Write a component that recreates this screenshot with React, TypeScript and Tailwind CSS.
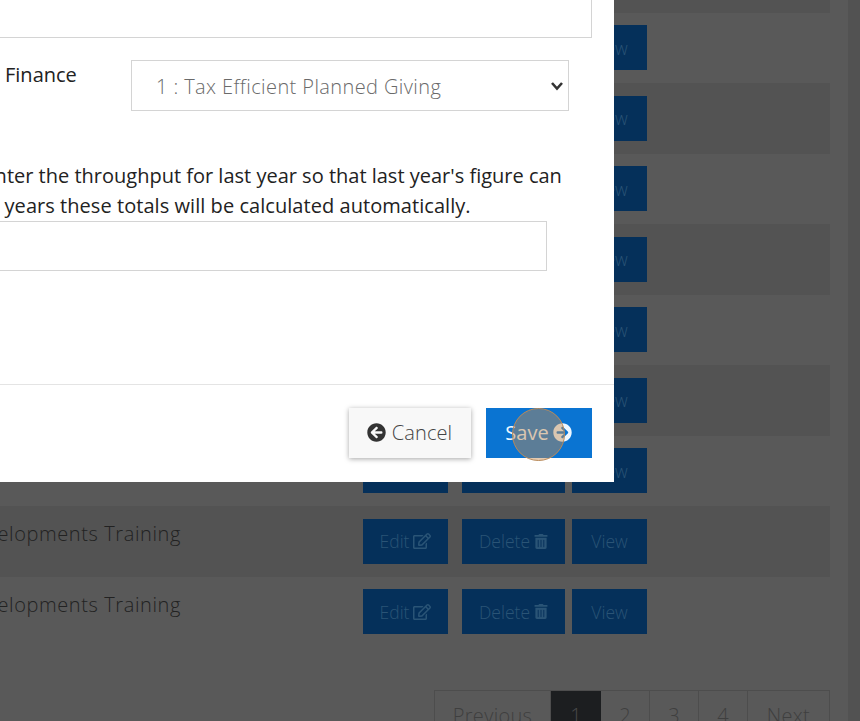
import { FaArrowCircleLeft, FaArrowCircleRight, FaRegEdit, FaTrashAlt } from "react-icons/fa";

const rowLabels = ["", "", "", "", "", "", "", "Developments Training", "Developments Training"];

const RowButtons = () => (
  <div className="flex gap-[7px] items-center">
    <span className="w-[85px] h-[45px] mr-[7px] bg-[#05305a] text-[#2a5476] flex items-center justify-center gap-1 text-[17.5px] font-light">
      Edit <FaRegEdit className="w-[18px] h-[18px]" />
    </span>
    <span className="w-[103px] h-[45px] bg-[#05305a] text-[#2a5476] flex items-center justify-center gap-1 text-[17.5px] font-light">
      Delete <FaTrashAlt className="w-[14px] h-[15px]" />
    </span>
    <span className="w-[75px] h-[45px] bg-[#05305a] text-[#2a5476] flex items-center justify-center text-[17.5px] font-light">
      View
    </span>
  </div>
);

const Pagination = () => (
  <div className="flex justify-end mt-[43px] text-[#3f3f3f] text-[20px] font-light tracking-[0.3px]">
    <div className="flex h-[60px] border border-[#4d4d4d]">
      <span className="w-[116px] pt-[10px] text-center border-r border-[#4d4d4d]">Previous</span>
      <span className="w-[50px] pt-[10px] text-center bg-[#1c1e20] text-[#4a4a4a]">1</span>
      <span className="w-[49px] pt-[10px] text-center border-r border-[#4d4d4d]">2</span>
      <span className="w-[49px] pt-[10px] text-center border-r border-[#4d4d4d]">3</span>
      <span className="w-[49px] pt-[10px] text-center border-r border-[#4d4d4d]">4</span>
      <span className="w-[81px] pt-[10px] text-center">Next</span>
    </div>
  </div>
);

const Modal = () => (
  <div className="absolute left-0 top-0 w-[614px] h-[482px] bg-white overflow-hidden flex flex-col text-[#222] z-10">
    <div className="h-[38px] w-[592px] border-b border-r border-[#d4d4d4] shrink-0" />
    <div className="flex mt-[22px] shrink-0">
      <label className="w-[131px] pl-[5px] pt-[1px] text-[20px] leading-[28px]">Finance</label>
      <div className="relative w-[438px] h-[51px]">
        <select
          defaultValue="1"
          className="appearance-none w-full h-full border border-[#d4d4d4] bg-white pl-[24px] pr-2 pt-[2px] text-[20px] font-light tracking-[0.4px] text-[#6a6a6a]"
        >
          <option value="1">1 : Tax Efficient Planned Giving</option>
        </select>
        <svg viewBox="0 0 14 10" className="absolute right-[5px] top-[21px] w-[14px] h-[10px] text-[#333]">
          <polyline points="2,2 7,7.5 12,2" fill="none" stroke="currentColor" strokeWidth="2.6" />
        </svg>
      </div>
    </div>
    <p className="mt-[50px] ml-[-82px] w-[680px] text-[20px] leading-[30px] shrink-0">
      Please enter the throughput for last year so that last year's figure can
      <br />
      <span className="tracking-[0.05px]">In future years these totals will be calculated automatically.</span>
    </p>
    <div className="h-[50px] w-[547px] border border-l-0 border-[#d4d4d4] shrink-0" />
    <div className="mt-[113px] border-t border-[#e4e4e4] flex justify-end items-center gap-[15px] pr-[22.5px] pt-[22.5px]">
      <button className="w-[122px] h-[50px] bg-[#f8f8f8] shadow-[0_1px_5px_rgba(0,0,0,0.35)] text-[#444] flex items-center justify-center gap-[6px] text-[20px] font-light tracking-[0.1px]">
        <FaArrowCircleLeft className="w-[19px] h-[19px] text-[#333]" /> Cancel
      </button>
      <button className="w-[106px] h-[50.5px] bg-[#0a74d2] text-[#eef7ff] flex items-center justify-center gap-[4px] text-[20px]">
        Save <FaArrowCircleRight className="w-[19px] h-[19px]" />
      </button>
    </div>
  </div>
);

const App = () => {
  return (
    <div className="relative w-[860px] h-[721px] overflow-hidden bg-[#595959] flex font-['Open_Sans',sans-serif]">
      <div className="w-[830px] shrink-0">
        <div className="h-[12.5px] bg-[#535353]" />
        {rowLabels.map((label, i) => (
          <div
            key={i}
            className={`h-[70.5px] flex items-center ${i % 2 === 0 ? "bg-[#595959]" : "bg-[#535353]"}`}
          >
            <div className="w-[363px] shrink-0 flex justify-end pr-[182px] pb-[14px] whitespace-nowrap text-[20px] font-light tracking-[0.6px] text-[#222]">
              {label}
            </div>
            <RowButtons />
          </div>
        ))}
        <Pagination />
      </div>
      <div className="w-[18px] shrink-0" />
      <div className="w-[12px] shrink-0 bg-[#525252]" />
      <Modal />
      <div className="absolute left-[512px] top-[408px] w-[53px] h-[53px] rounded-full bg-[#c08a50]/45 border-[1.5px] border-[#b98a5a] z-20" />
    </div>
  );
};

export default App;
